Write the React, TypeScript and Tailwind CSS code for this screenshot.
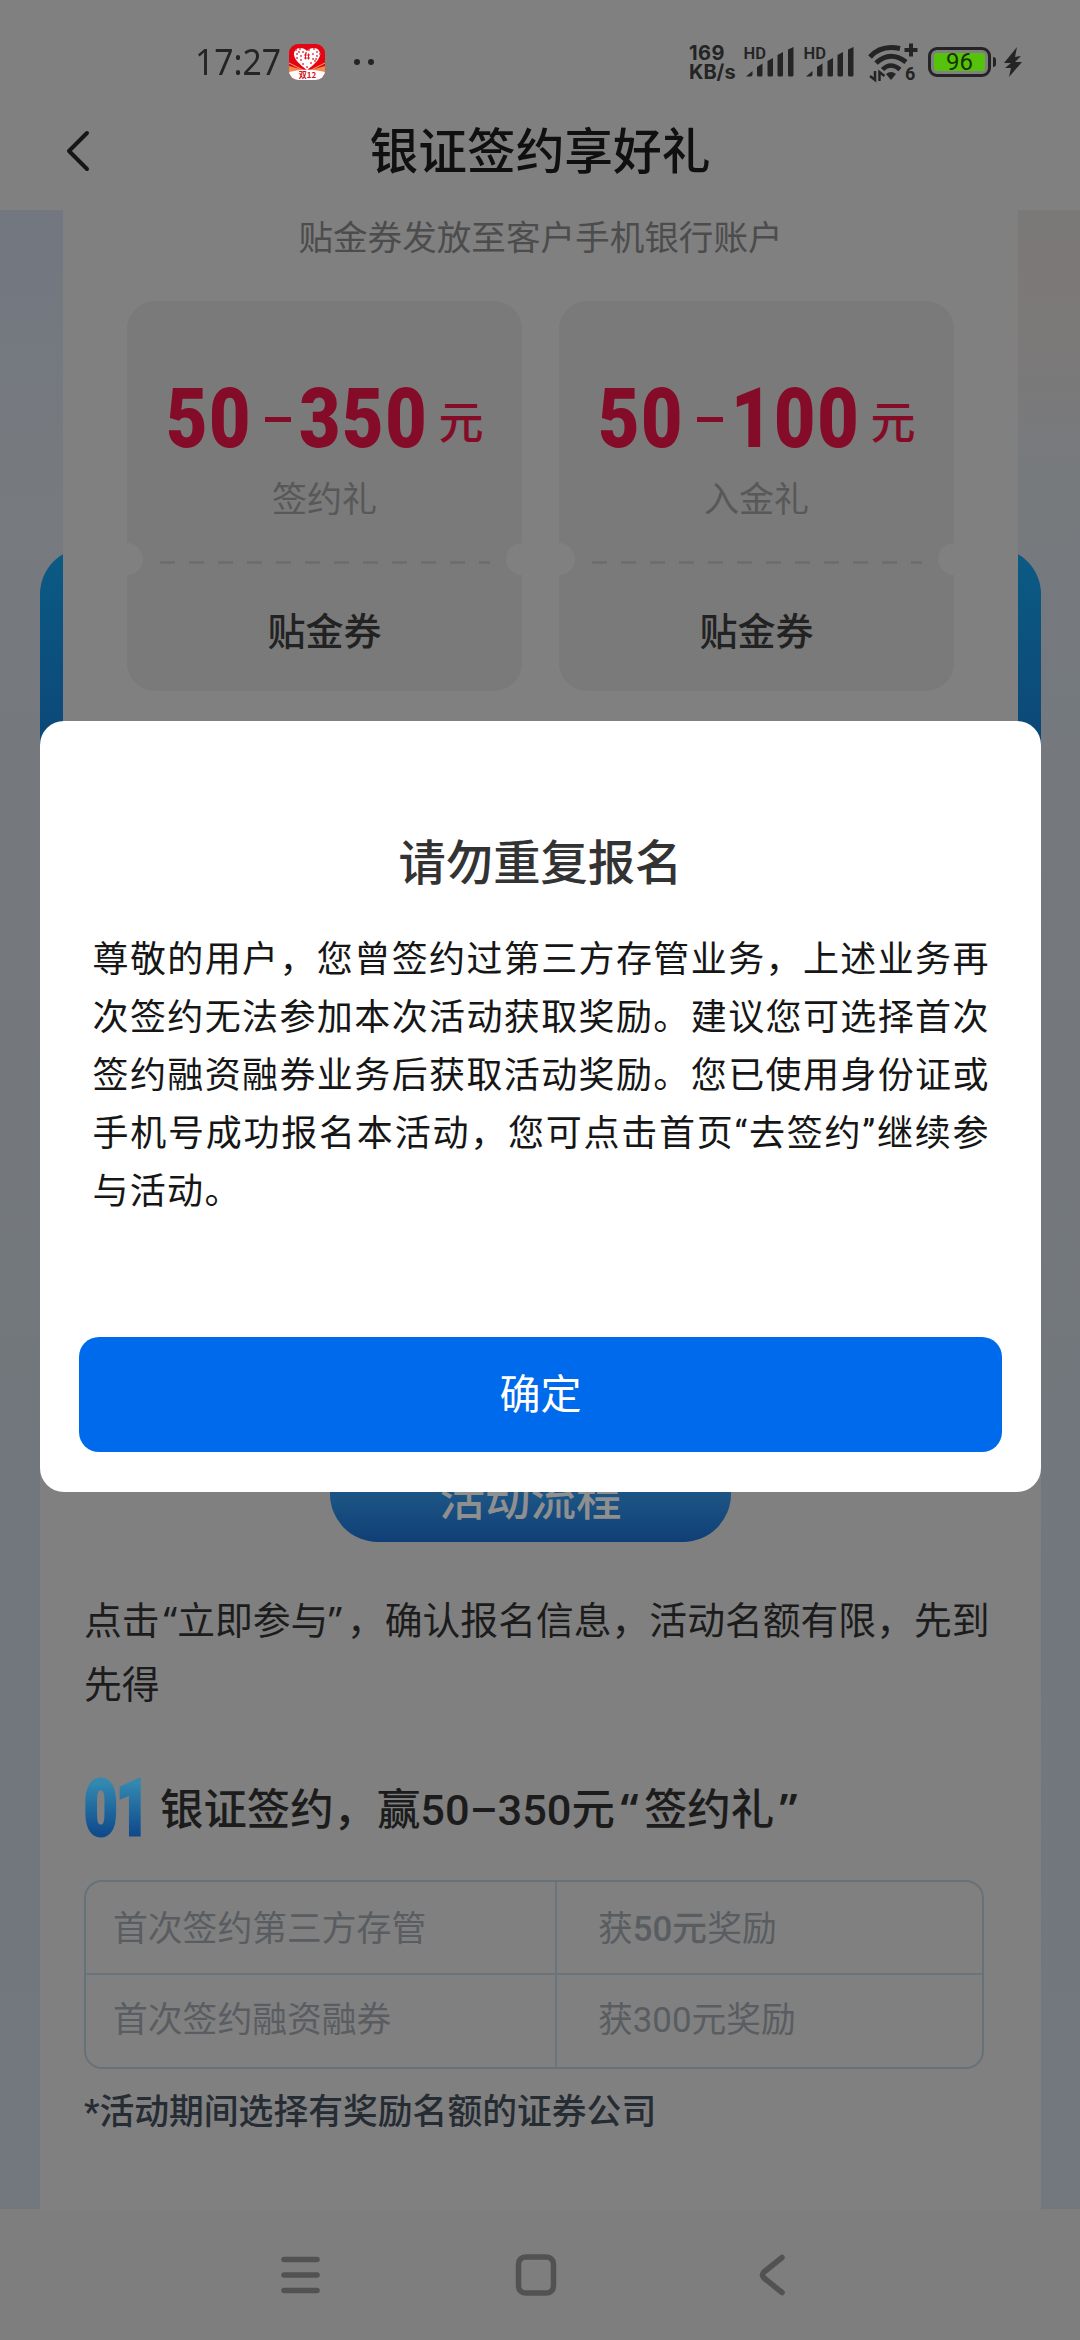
import React from "react";

const cjk = "font-['Roboto','Noto_Sans_CJK_SC',sans-serif]";

function AppBadge() {
  const dots = [
    [7, 6], [11, 5], [14, 8], [8, 10], [12, 12], [17, 9], [20, 6], [25, 5], [28, 8], [24, 10], [28, 12],
    [8, 14], [12, 16], [24, 15], [22, 19], [14, 20], [18, 23], [26, 17], [10, 8], [31, 10], [27, 15],
  ];
  return (
    <svg className="ml-[9px] h-9 w-9" viewBox="0 0 36 36">
      <defs>
        <clipPath id="badge"><rect width="36" height="36" rx="9" /></clipPath>
      </defs>
      <g clipPath="url(#badge)">
        <rect width="36" height="36" fill="#e50512" />
        <path d="M0 22 L18 27 L36 22 V30 H0Z" fill="#f58a4a" />
        <path d="M0 19 L16 27 M36 19 L20 27" stroke="#f9a56c" strokeWidth="1" />
        <path d="M0 28 Q18 23 36 28 V36 H0Z" fill="#fff" />
        <path d="M18 26 C10 20 5 15 5 10 C5 3 14 2 18 7 C22 2 31 3 31 10 C31 15 26 20 18 26Z" fill="#fff" />
        {dots.map(([x, y]) => (
          <circle key={`${x}-${y}`} cx={x} cy={y} r="1" fill="#e8444c" />
        ))}
        <path d="M15 11h6 M15 14h6 M16.5 9.5v6 M19.5 9.5v6" stroke="#e50512" strokeWidth="0.9" />
        <text x="18.5" y="34" textAnchor="middle" fontSize="8" fontWeight="700" fill="#d81020" fontFamily="Noto Sans CJK SC">双12</text>
      </g>
    </svg>
  );
}

function Signal() {
  return (
    <svg className="h-[34px] w-[52px] overflow-visible" viewBox="0 0 52 34" fill="#242424">
      <text x="-0.500" y="13.500" fontFamily="Roboto" fontSize="16.500" fontWeight="600">HD</text>
      <path d="M2 31.500 L8.500 26 V29.500 Q8.500 31.500 6.500 31.500Z" />
      <path d="M13 22 L18.500 18.500 V30 Q18.500 31.500 17 31.500 H14.500 Q13 31.500 13 30Z" />
      <path d="M23.500 16 L29 13 V30 Q29 31.500 27.500 31.500 H25 Q23.500 31.500 23.500 30Z" />
      <path d="M33.500 10 L39 7 V30 Q39 31.500 37.500 31.500 H35 Q33.500 31.500 33.500 30Z" />
      <path d="M44 4.500 L49.500 2 V30 Q49.500 31.500 48 31.500 H45.500 Q44 31.500 44 30Z" />
    </svg>
  );
}

function Wifi() {
  return (
    <svg className="ml-[11px] h-10 w-[52px] overflow-visible" viewBox="0 0 52 40" fill="none" stroke="#242424">
      <path d="M3 15 Q14 2.500 33 6.500" strokeWidth="5" />
      <path d="M9 21 Q23 8 39 20" strokeWidth="5" />
      <path d="M15.500 27.500 Q23.500 19.500 33 27.500" strokeWidth="4.500" />
      <path d="M19 32 Q24 28 29 32 L24 38Z" fill="#242424" stroke="none" />
      <path d="M44 1.500 V14.500 M37.500 8 H50.500" strokeWidth="4" />
      <path d="M8 29 V38 L3 34 M12.500 39 V30 L17.500 34" strokeWidth="2.500" />
      <text x="38" y="37.500" fill="#242424" stroke="none" fontFamily="Roboto" fontSize="18" fontWeight="700">6</text>
    </svg>
  );
}

function StatusBar() {
  return (
    <div className="flex h-[124px] items-center pl-[195px] text-[#242424]">
      <div className="mb-1 w-[85px] font-['Noto_Sans'] text-[37px] leading-none">
        <span className="inline-block origin-left scale-x-[0.91]">17:27</span>
      </div>
      <AppBadge />
      <div className="ml-[29px] flex gap-2">
        <i className="h-1.5 w-1.5 rounded-full bg-[#242424]" />
        <i className="h-1.5 w-1.5 rounded-full bg-[#242424]" />
      </div>
      <div className="ml-[315px] w-[55px] pt-0.5 font-['Inter'] text-[20px] leading-[19px] font-bold">
        <div className="tracking-[0.5px]">169</div>
        <div>KB/s</div>
      </div>
      <div className="flex gap-2">
        <Signal />
        <Signal />
      </div>
      <Wifi />
      <div className="ml-[9px] flex h-[30px] w-[63px] items-center justify-center rounded-[9px] border-[3px] border-[#242424] p-[3px]">
        <div className="flex h-full w-full items-center justify-center rounded-[3px] bg-[#55c30b] font-['Roboto'] text-[24px] leading-none text-[#173300]">96</div>
      </div>
      <i className="ml-0.5 h-[10px] w-[3px] rounded-r bg-[#242424]" />
      <svg className="ml-2 h-[30px] w-[18px]" viewBox="0 0 18 30" fill="#242424">
        <path d="M13 0 L0 16 H7 L1 21 L7 21 L5 30 L18 15 H11 L17 9 L11 10Z" />
      </svg>
    </div>
  );
}

function Coupon({ high, name }: { high: string; name: string }) {
  return (
    <div className="relative flex h-[390px] w-[395px] flex-col items-center overflow-hidden rounded-[28px] bg-[#7a7a7a]">
      <div className="mt-[76px] flex h-[84px] w-[318px] items-center justify-between text-[#840c28]">
        <div className="flex w-[262px] items-center font-['Roboto'] text-[83px] leading-[84px] font-bold">
          <span className="w-[99px]"><b className="inline-block origin-left scale-x-[0.86] tracking-[2px]">50</b></span>
          <i className="h-[5px] w-[26px] shrink-0 bg-[#840c28]" />
          <span className="ml-2"><b className="inline-block origin-left scale-x-[0.86] tracking-[2px]">{high}</b></span>
        </div>
        <span className="mt-2 text-[45px] leading-none font-medium">元</span>
      </div>
      <div className="mt-[22px] text-[35px] leading-[36px] text-[#585858]">{name}</div>
      <i className="absolute top-[242px] -left-4 h-8 w-8 rounded-full bg-[#808080]" />
      <i className="absolute top-[242px] -right-4 h-8 w-8 rounded-full bg-[#808080]" />
      <div className="mt-[42px] h-[3px] w-[330px] bg-[repeating-linear-gradient(90deg,#6e6e6e_0_15px,transparent_15px_29px)]" />
      <div className="mt-[48px] text-[38px] leading-[40px] font-medium text-[#222]">贴金券</div>
    </div>
  );
}

function OfferPanel() {
  return (
    <section className="relative h-[520px] bg-[linear-gradient(180deg,#727780_0%,#777b7f_60%,#75797d_100%)]">
      <div className="absolute inset-y-0 right-0 w-16 bg-[linear-gradient(180deg,#7b7977_0%,#7c7979_25%,#777a7d_50%,#74797e_100%)]" />
      <div className="absolute top-[338px] left-10 h-[200px] w-[1001px] rounded-t-[46px] bg-linear-to-b from-[#0b5b85] to-[#0c4777]" />
      <div className="relative ml-[63px] h-full w-[955px] bg-[#808080]">
        <div className="pt-[10px] text-center text-[34.600px] leading-[36px] text-[#4c4c4c]">
          贴金券发放至客户手机银行账户
        </div>
        <div className="mt-[45px] flex justify-between px-16">
          <Coupon high="350" name="签约礼" />
          <Coupon high="100" name="入金礼" />
        </div>
      </div>
    </section>
  );
}

function Dialog() {
  const lines = [
    "尊敬的用户，您曾签约过第三方存管业务，上述业务再",
    "次签约无法参加本次活动获取奖励。建议您可选择首次",
    "签约融资融券业务后获取活动奖励。您已使用身份证或",
    "手机号成功报名本活动，您可点击首页“去签约”继续参",
  ];
  return (
    <div role="dialog" className="absolute top-[721px] left-10 flex h-[771px] w-[1001px] flex-col rounded-[24px] bg-white px-[39px]">
      <h2 className="mt-[116px] text-center text-[47.300px] leading-[54px] font-medium text-[#333]">请勿重复报名</h2>
      <div className="mt-[40px] px-[13.500px] text-[36px] leading-[58px] text-[#161616]">
        {lines.map((line) => (
          <p key={line} className="whitespace-nowrap [text-align-last:justify]">{line}</p>
        ))}
        <p className="tracking-[1.3px]">与活动。</p>
      </div>
      <button className="mt-auto mb-10 h-[115px] rounded-[20px] bg-[#006aec] pt-[3px] text-[41px] text-white">确定</button>
    </div>
  );
}

function Steps() {
  return (
    <section className="h-[1479px] shrink-0 bg-[linear-gradient(180deg,#75797d_0%,#72777d_60%,#73787e_100%)] px-10">
      <div className="flex h-full w-[1001px] flex-col pt-[715px]">
        <div className="h-[764px] rounded-t-[24px] bg-[#808080] px-[44px]">
          <div className="ml-[246px] flex h-[97px] w-[401px] items-center justify-center rounded-[48px] bg-linear-to-b from-[#2a6c92] to-[#103f77] pt-[14px] text-[45.500px] leading-none font-medium text-[#8f8f8f]">活动流程</div>
          <div className="mt-[48px] text-[37.800px] leading-[63.500px] text-[#1c1c1c]">
            <p className="w-[905px] whitespace-nowrap [text-align-last:justify]">
              点击<span className="pl-1 font-['Noto_Sans'] leading-none">“</span>立即参与<span className="pr-[5px] font-['Noto_Sans'] leading-none">”</span>，确认报名信息，活动名额有限，先到
            </p>
            <p>先得</p>
          </div>
          <div className="mt-[55px] flex h-[74px] items-center">
            <div className="w-[76px]">
              <span className="inline-block origin-left scale-x-[0.74] bg-linear-to-b from-[#3388b0] from-15% to-[#104a8c] to-85% bg-clip-text font-['Roboto'] text-[78px] leading-[74px] font-black tracking-[-2px] text-transparent [-webkit-text-stroke:3px_transparent]">01</span>
            </div>
            <h3 className="pt-px text-[43.400px] leading-none font-medium whitespace-nowrap text-[#1c1c1c]">
              银证签约，赢50–350元<span className="inline-block w-[29px] text-center font-['Noto_Sans'] font-semibold">“</span>签约礼<span className="inline-block w-[29px] text-center font-['Noto_Sans'] font-semibold">”</span>
            </h3>
          </div>
          <div className="mt-[34px] grid h-[189px] w-[900px] grid-cols-[471px_1fr] grid-rows-2 rounded-[18px] border-2 border-[#66727a] text-[34.800px] leading-none text-[#595d61]">
            <div className="flex items-center border-r-2 border-b-2 border-[#6b747a] pt-1 pl-[27px]">首次签约第三方存管</div>
            <div className="flex items-center border-b-2 border-[#6b747a] pt-1 pl-[41px]"><span>获<span className="font-medium">50元</span>奖励</span></div>
            <div className="flex items-center border-r-2 border-[#6b747a] pl-[27px]">首次签约融资融券</div>
            <div className="flex items-center pl-[41px]">获300元奖励</div>
          </div>
          <p className="mt-[25px] text-[34.800px] leading-[36px] font-medium text-[#262c33]">*活动期间选择有奖励名额的证券公司</p>
        </div>
      </div>
    </section>
  );
}

function NavBar() {
  return (
    <nav className="h-[131px] bg-[#7e7e7e]">
      <svg className="h-full w-full" viewBox="0 0 1080 131" fill="none" stroke="#525252" strokeWidth="5.500" strokeLinecap="round" strokeLinejoin="round">
        <path d="M284 50.500H317 M284 66H317 M284 81.500H317" />
        <rect x="518.500" y="48" width="35" height="36" rx="7" />
        <path d="M782 48.500 L764 63 Q761 66 764 69 L782 83.500" />
      </svg>
    </nav>
  );
}

export default function App() {
  return (
    <main className={`relative h-[2340px] w-[1080px] overflow-hidden bg-[#808080] ${cjk}`}>
      <StatusBar />
      <header className="relative flex h-[86px] items-center justify-center pb-[28px]">
        <svg className="absolute top-[5px] left-[64px] h-[44px] w-[28px]" viewBox="0 0 28 44" fill="none" stroke="#161616" strokeWidth="4" strokeLinecap="round" strokeLinejoin="round">
          <path d="M23 4 L5 22 L23 40" />
        </svg>
        <h1 className="text-[48.700px] leading-none font-medium text-[#101010]">银证签约享好礼</h1>
      </header>
      <OfferPanel />
      <Steps />
      <NavBar />
      <Dialog />
    </main>
  );
}
